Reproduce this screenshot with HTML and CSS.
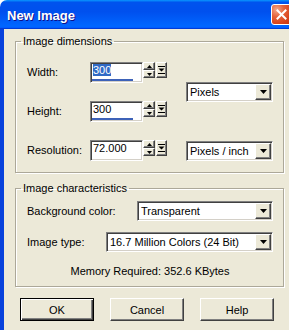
FILE: index.html
```html
<!DOCTYPE html>
<html>
<head>
<meta charset="utf-8">
<link rel="stylesheet" href="styles.css">
</head>
<body>
<div class="window">
  <div class="titlebar">
    <span class="title">New Image</span>
    <div class="close"><svg width="13" height="13" viewBox="0 0 13 13"><path d="M2.5 2.5 L10.5 10.5 M10.5 2.5 L2.5 10.5" stroke="#fff" stroke-width="2" stroke-linecap="square"/></svg></div>
  </div>
  <div class="content">
    <fieldset class="group g1">
      <legend>Image dimensions</legend>
      <div class="dims">
        <span class="lbl row1">Width:</span>
        <div class="field row1"><span class="txt"><span class="sel">300</span></span><i class="bar"></i></div>
        <div class="spins row1">
          <div class="pair"><span class="sbtn"><svg width="5" height="3" viewBox="0 0 5 3"><path d="M2.5 0 L5 3 L0 3Z"/></svg></span><span class="sbtn"><svg width="5" height="3" viewBox="0 0 5 3"><path d="M0 0 L5 0 L2.5 3Z"/></svg></span></div>
          <span class="mbtn"><svg width="7" height="8" viewBox="0 0 7 8"><path d="M0 0H7V1H0Z M0.5 2.5 L6.5 2.5 L3.5 5.5Z M0 7H7V8H0Z"/></svg></span>
        </div>
        <div class="combo unit1"><span class="ctext">Pixels</span><span class="dd"><svg width="7" height="4" viewBox="0 0 7 4"><path d="M0 0 L7 0 L3.5 4Z"/></svg></span></div>

        <span class="lbl row2">Height:</span>
        <div class="field row2"><span class="txt">300</span><i class="bar"></i></div>
        <div class="spins row2">
          <div class="pair"><span class="sbtn"><svg width="5" height="3" viewBox="0 0 5 3"><path d="M2.5 0 L5 3 L0 3Z"/></svg></span><span class="sbtn"><svg width="5" height="3" viewBox="0 0 5 3"><path d="M0 0 L5 0 L2.5 3Z"/></svg></span></div>
          <span class="mbtn"><svg width="7" height="8" viewBox="0 0 7 8"><path d="M0 0H7V1H0Z M0.5 2.5 L6.5 2.5 L3.5 5.5Z M0 7H7V8H0Z"/></svg></span>
        </div>

        <span class="lbl row3">Resolution:</span>
        <div class="field row3"><span class="txt">72.000</span></div>
        <div class="spins row3">
          <div class="pair"><span class="sbtn"><svg width="5" height="3" viewBox="0 0 5 3"><path d="M2.5 0 L5 3 L0 3Z"/></svg></span><span class="sbtn"><svg width="5" height="3" viewBox="0 0 5 3"><path d="M0 0 L5 0 L2.5 3Z"/></svg></span></div>
          <span class="mbtn"><svg width="7" height="8" viewBox="0 0 7 8"><path d="M0 0H7V1H0Z M0.5 2.5 L6.5 2.5 L3.5 5.5Z M0 7H7V8H0Z"/></svg></span>
        </div>
        <div class="combo unit2"><span class="ctext">Pixels / inch</span><span class="dd"><svg width="7" height="4" viewBox="0 0 7 4"><path d="M0 0 L7 0 L3.5 4Z"/></svg></span></div>
      </div>
    </fieldset>

    <fieldset class="group g2">
      <legend>Image characteristics</legend>
      <div class="crow">
        <span class="lbl lbl-bg">Background color:</span>
        <div class="combo grow"><span class="ctext">Transparent</span><span class="dd"><svg width="7" height="4" viewBox="0 0 7 4"><path d="M0 0 L7 0 L3.5 4Z"/></svg></span></div>
      </div>
      <div class="crow">
        <span class="lbl lbl-type">Image type:</span>
        <div class="combo grow"><span class="ctext">16.7 Million Colors (24 Bit)</span><span class="dd"><svg width="7" height="4" viewBox="0 0 7 4"><path d="M0 0 L7 0 L3.5 4Z"/></svg></span></div>
      </div>
      <div class="memory">Memory Required: 352.6 KBytes</div>
    </fieldset>

    <div class="buttons">
      <button class="btn default">OK</button>
      <button class="btn">Cancel</button>
      <button class="btn">Help</button>
    </div>
  </div>
</div>
</body>
</html>
```

FILE: styles.css
```css
html, body {
  margin: 0;
  padding: 0;
  background: #fff;
  overflow: hidden;
}
body {
  font-family: "Liberation Sans", Arial, sans-serif;
  font-size: 11px;
  color: #000;
}
.window {
  width: 289px;
  height: 330px;
  display: flex;
  flex-direction: column;
  overflow: hidden;
}
.titlebar {
  height: 29px;
  flex: none;
  display: flex;
  align-items: center;
  justify-content: space-between;
  padding-left: 7px;
  border-top-left-radius: 7px;
  background: linear-gradient(180deg, #0997ff, #0053ee 8%, #0050ee 40%, #0066ff 88%, #0066ff 93%, #005bff 95%, #003dd7 96%, #003dd7);
  overflow: hidden;
}
.title {
  color: #fff;
  font-weight: bold;
  font-size: 13px;
  text-shadow: 1px 1px #0f1089;
  padding-top: 2px;
}
.close {
  flex: none;
  width: 19px;
  height: 19px;
  margin-right: -3px;
  border: 1px solid #fff;
  border-radius: 3px;
  background: radial-gradient(circle at 25% 25%, #f3a98e 0%, #e5643c 35%, #d8431c 70%, #c03510 100%);
  display: flex;
  align-items: center;
  justify-content: center;
}
.content {
  flex: 1;
  background: #ece9d8;
  border-left: 4px solid #0842dc;
  padding: 6px 0 0 11px;
  display: flex;
  flex-direction: column;
}
.group {
  margin: 0;
  width: 269px;
  box-sizing: border-box;
  border: 1px solid #aca899;
  box-shadow: inset 1px 1px #fff, 1px 1px #fff;
  min-width: 0;
}
.group legend {
  margin-left: -6px;
  padding: 0 2px;
  line-height: 13px;
}
.g1 {
  padding: 14px 10px 11px 11px;
}
.g2 {
  margin-top: 9px;
  padding: 6px 10px 8px 11px;
}
.dims {
  display: grid;
  grid-template-columns: 63px 53px 24px 1fr;
  grid-template-rows: 21px 21px 21px;
  row-gap: 18px;
}
.row1 { grid-row: 1; }
.row2 { grid-row: 2; }
.row3 { grid-row: 3; }
.lbl {
  align-self: center;
  line-height: 13px;
}
.dims .lbl { grid-column: 1; }
.field {
  grid-column: 2;
  box-sizing: border-box;
  background: #fff;
  border: 1px solid;
  border-color: #808080 #fff #fff #808080;
  box-shadow: inset 1px 1px #404040, inset -1px -1px #d4d0c8;
  padding: 1px 1px 1px 1px;
  display: flex;
  flex-direction: column;
}
.txt {
  line-height: 13px;
  padding-left: 1px;
}
.sel {
  background: #316ac5;
  color: #fff;
}
.bar {
  display: block;
  margin-top: auto;
  width: 41px;
  height: 2px;
  background: #3d62b8;
}
.spins {
  grid-column: 3;
  display: flex;
  gap: 1px;
  align-self: start;
  height: 16px;
}
.pair {
  width: 12px;
  display: flex;
  flex-direction: column;
}
.sbtn, .mbtn, .dd {
  box-sizing: border-box;
  background: #ece9d8;
  border: 1px solid;
  border-color: #fff #404040 #404040 #fff;
  box-shadow: inset -1px -1px #808080;
  display: flex;
  align-items: center;
  justify-content: center;
}
.sbtn {
  height: 8px;
}
.mbtn {
  width: 11px;
  height: 16px;
}
.combo {
  box-sizing: border-box;
  height: 20px;
  background: #fff;
  border: 1px solid;
  border-color: #808080 #fff #fff #808080;
  box-shadow: inset 1px 1px #404040, inset -1px -1px #d4d0c8;
  padding: 1px;
  display: flex;
  align-items: center;
}
.ctext {
  flex: 1;
  padding-left: 2px;
  white-space: nowrap;
  overflow: hidden;
}
.dd {
  flex: none;
  width: 16px;
  height: 16px;
}
.unit1 {
  grid-column: 4;
  grid-row: 1 / 3;
  align-self: center;
  margin-left: 19px;
}
.unit2 {
  grid-column: 4;
  grid-row: 3;
  align-self: center;
  margin-left: 19px;
}
.crow {
  display: flex;
  align-items: center;
  height: 20px;
}
.crow + .crow {
  margin-top: 11px;
}
.lbl-bg { width: 110px; flex: none; }
.lbl-type { width: 79px; flex: none; }
.grow { flex: 1; }
.memory {
  margin-top: 13px;
  text-align: center;
  line-height: 13px;
}
.buttons {
  display: flex;
  gap: 16px;
  margin-top: 11px;
  padding-left: 5px;
}
.btn {
  width: 74px;
  height: 23px;
  box-sizing: border-box;
  margin: 0;
  padding: 0;
  font-family: "Liberation Sans", Arial, sans-serif;
  font-size: 11px;
  color: #000;
  background: #ece9d8;
  border: 1px solid;
  border-color: #fff #404040 #404040 #fff;
  box-shadow: inset -1px -1px #808080;
}
.btn.default {
  border-color: #000;
  box-shadow: inset 1px 1px #fff, inset -1px -1px #404040, inset -2px -2px #808080;
}
```
